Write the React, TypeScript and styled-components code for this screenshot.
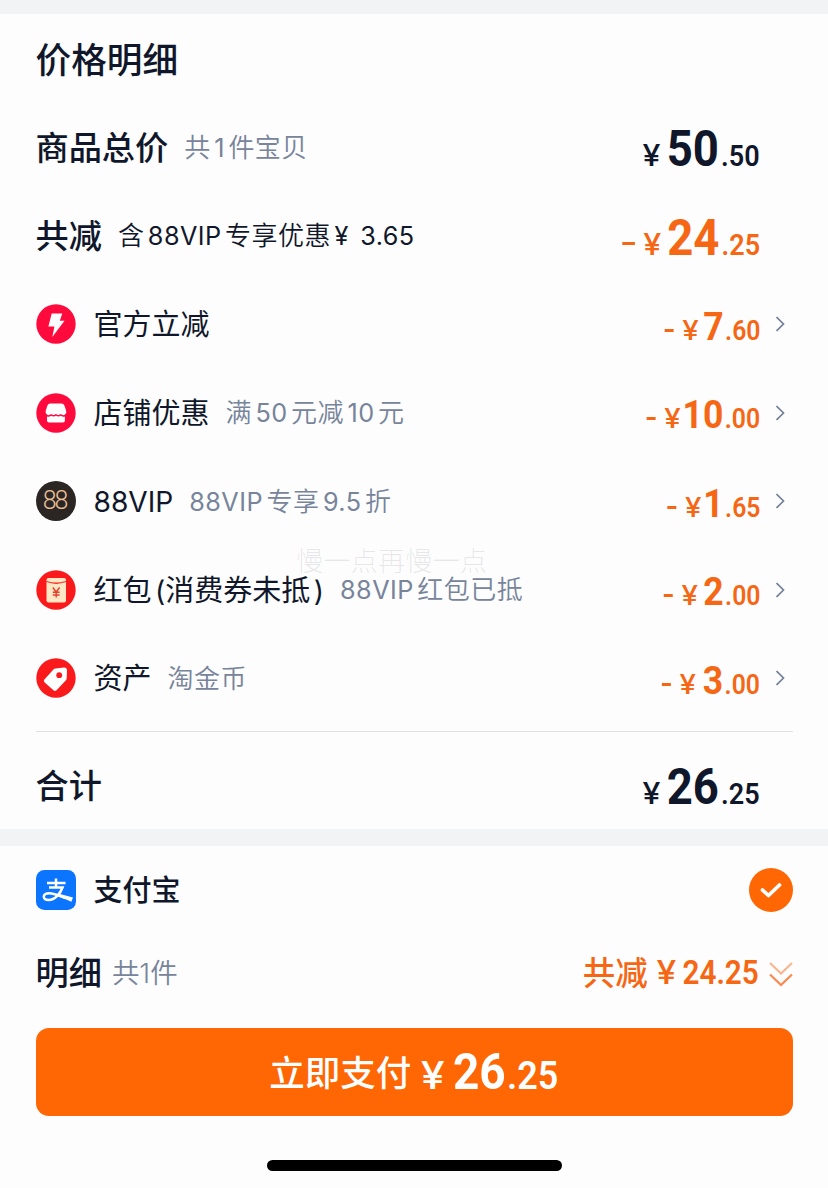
import { FC, ReactNode } from "react";
import styled, { createGlobalStyle, css } from "styled-components";

interface IAmountProps {
    int: string;
    dec: string;
    minus?: boolean;
    large?: boolean;
    gap?: number;
}

interface IDiscount {
    icon: ReactNode;
    name: string;
    note?: string;
    int: string;
    dec: string;
    gap?: number;
}

const GlobalStyle = createGlobalStyle`
  * {
    box-sizing: border-box;
  }

  body {
    margin: 0;
    background: #fdfdfe;
    color: #10172a;
    font-family: Inter, "Noto Sans CJK SC", sans-serif;
  }
`;

const Page = styled.main`
  position: relative;
  width: 828px;
  height: 1188px;
  overflow: hidden;
`;

const Strip = styled.div<{ $height: number }>`
  height: ${(p) => p.$height}px;
  background: #f2f3f5;
`;

const Section = styled.section<{ $height: number }>`
  height: ${(p) => p.$height}px;
  padding: 0 35.5px;
`;

const Row = styled.div<{ $height?: number }>`
  display: flex;
  align-items: center;
  height: ${(p) => p.$height ?? 88.5}px;
  white-space: nowrap;
`;

const Title = styled.h1`
  margin: 0;
  padding-top: 2px;
  font-size: 35.7px;
  line-height: 48px;
  font-weight: 500;
`;

const Strong = styled.span`
  padding-top: 1px;
  font-size: 33.2px;
  line-height: 44px;
  font-weight: 500;
`;

const Latin = styled.span<{ $first: boolean; $last: boolean }>`
  margin-left: ${(p) => (p.$first ? 0 : 3.5)}px;
  margin-right: ${(p) => (p.$last ? 0 : 3.5)}px;
  font-size: 0.97em;
  font-weight: 400;
  word-spacing: 4px;
`;

const Name = styled.span<{ $medium?: boolean }>`
  margin-left: 18px;
  padding-top: 2px;
  font-size: 29px;
  line-height: 40px;
  font-weight: ${(p) => (p.$medium ? 500 : 400)};

  ${Latin} {
    margin-right: 0;
  }
`;

const Note = styled.span<{ $dark?: boolean; $tight?: boolean }>`
  margin-left: ${(p) => (p.$tight ? 10 : 16)}px;
  padding-top: 1px;
  color: ${(p) => (p.$dark ? "#10172a" : "#77849a")};
  font-size: ${(p) => (p.$tight ? 27.5 : 26)}px;
  line-height: 36px;
  font-weight: 350;
  letter-spacing: ${(p) => (p.$tight ? 0 : 0.45)}px;
`;

// Roboto is squeezed a little to look like a DIN face
const AmountBox = styled.span<{ $large?: boolean; $minus?: boolean }>`
  display: flex;
  align-items: baseline;
  margin-left: auto;
  margin-right: 32.5px;
  padding-top: 9px;
  color: ${(p) => (p.$minus ? "#f56714" : "#10172a")};
  font-family: Roboto, sans-serif;
  font-weight: 600;
  line-height: 48px;
  font-size: 27.5px;
  transform: scaleX(0.9);
  transform-origin: right;

  ${(p) =>
    p.$large &&
    css`
      padding-top: 11px;
      font-size: 30px;
    `}
`;

const Minus = styled.i<{ $large?: boolean }>`
  width: ${(p) => (p.$large ? 13.5 : 10)}px;
  height: 3px;
  margin-right: 13px;
  background: currentColor;
  transform: translateY(${(p) => (p.$large ? -10 : -8)}px);
`;

const Yen = styled.span`
  font-family: Inter, sans-serif;
  font-weight: 500;
  font-size: 0.98em;
  transform: scaleX(1.22);
  transform-origin: right;
`;

const Int = styled.span<{ $large?: boolean; $gap?: number }>`
  margin-left: ${(p) => p.$gap ?? 7}px;
  margin-right: ${(p) => (p.$large ? 2.5 : 1.5)}px;
  font-size: ${(p) => (p.$large ? 50.5 : 39.5)}px;
  font-weight: 700;
`;

const Arrow = styled.svg`
  width: 10px;
  height: 16px;
  margin: 0 7px 0 -17px;
`;

const Divider = styled.hr`
  height: 1px;
  margin: 8px 0 0;
  border: 0;
  background: #dfe1e5;
`;

const Badge = styled.svg`
  width: 40px;
  height: 40px;
  flex: none;
`;

const Vip = styled.span`
  display: flex;
  align-items: center;
  justify-content: center;
  width: 40px;
  height: 40px;
  border-radius: 50%;
  background: #2b2623;
  color: #e9bf98;
  font: 300 25px/40px Roboto, sans-serif;
  letter-spacing: -2px;
  text-indent: -2px;
`;

const Check = styled.svg`
  width: 44px;
  height: 44px;
  margin-left: auto;
`;

const Saved = styled.span`
  display: flex;
  align-items: baseline;
  margin-left: auto;
  padding-top: 4px;
  color: #f56714;
  font-size: 32.5px;
  line-height: 44px;
  font-weight: 500;
`;

const SavedSum = styled.span`
  display: flex;
  gap: 7px;
  align-items: baseline;
  margin-left: 1px;
  font-family: Roboto, sans-serif;
  font-size: 33px;
  font-weight: 600;
  transform: translateY(-1px) scaleX(0.9);
  transform-origin: right;
`;

const Down = styled.svg`
  align-self: center;
  width: 24px;
  height: 28px;
  margin-left: 10px;
`;

const PayButton = styled.button`
  display: flex;
  justify-content: center;
  align-items: baseline;
  width: 100%;
  height: 88px;
  margin: 17px 0 0;
  padding: 0;
  border: 0;
  border-radius: 13px;
  background: #ff6604;
  color: #fff;
  font-family: Inter, "Noto Sans CJK SC", sans-serif;
  font-size: 35.5px;
  font-weight: 500;
  line-height: 88px;
`;

const PayLabel = styled.span`
  transform: translateY(-3px);
`;

const PaySum = styled.span`
  display: flex;
  align-items: baseline;
  margin-left: 1px;
  font-family: Roboto, sans-serif;
  font-size: 39.5px;
  font-weight: 600;
  transform: scaleX(0.91);
  transform-origin: right;
`;

const PayInt = styled.span`
  margin: 0 1.5px 0 9px;
  font-size: 50.5px;
  font-weight: 700;
`;

const HomeBar = styled.div`
  width: 295px;
  height: 11px;
  margin: 44.5px auto 0;
  border-radius: 6px;
  background: #000;
`;

// Lies over the list, between two rows
const Watermark = styled.div`
  position: absolute;
  left: 296px;
  top: 543px;
  color: rgba(20, 25, 40, 0.1);
  font-size: 27.3px;
  line-height: 38px;
  font-weight: 300;
`;

// Adds a thin gap between chinese and latin runs
const mixed = (text: string) =>
    text
        .split(/([\x21-\x7e¥]+(?: [\x21-\x7e]+)*)/)
        .filter(Boolean)
        .map((run, i, runs) =>
            /^[\x21-\x7e¥]/.test(run) ? (
                <Latin key={i} $first={i === 0} $last={i === runs.length - 1}>
                    {run}
                </Latin>
            ) : (
                run
            )
        );

const Amount: FC<IAmountProps> = ({ int, dec, minus, large, gap }) => (
    <AmountBox $large={large} $minus={minus}>
        {minus && <Minus $large={large} />}
        <Yen>¥</Yen>
        <Int $large={large} $gap={gap}>{int}</Int>
        <span>.{dec}</span>
    </AmountBox>
);

const FlashIcon = () => (
    <Badge viewBox="0 0 40 40">
        <circle cx="20" cy="20" r="19.7" fill="#ff0a3c" />
        <path d="M15.7 9.5h10.6l-2.5 7.3h4.7L16.3 33l2.1-10.5h-6z" fill="#fff" />
    </Badge>
);

const ShopIcon = () => (
    <Badge viewBox="0 0 40 40">
        <circle cx="20" cy="20" r="19.7" fill="#ff0a3c" />
        <path d="M14.5 10.5h10.8q2.4 0 3.2 2.3l1.7 5.1q.7 2.6-1.4 3.9-2.1 1-4-.8-2.4 2-4.9 0-2.4 2-4.8 0-2 1.8-4 .8-2.1-1.3-1.4-3.9l1.6-5.1q.8-2.3 3.2-2.3z" fill="#fff" />
        <path d="M11 23.5q2.2.7 4.2-.8 2.4 1.6 4.8 0 2.4 1.6 4.8 0 2 1.5 4.1.8v4q0 2-2 2H13q-2 0-2-2z" fill="#fff" />
    </Badge>
);

const PacketIcon = () => (
    <Badge viewBox="0 0 40 40">
        <circle cx="20" cy="20" r="19.7" fill="#fa1a1c" />
        <rect x="10.5" y="8" width="19.5" height="24.5" rx="2" fill="#ffe6c4" />
        <path d="M10.5 11.5q9.7 3.5 19.5 0" fill="none" stroke="#f0302a" strokeWidth="1.3" />
        <path d="M16.8 17.5l3.4 4.5 3.4-4.5M20.2 22v5.5M16.8 22.3h6.8M16.8 25h6.8" fill="none" stroke="#e2402c" strokeWidth="1.4" />
    </Badge>
);

const TagIcon = () => (
    <Badge viewBox="0 0 40 40">
        <circle cx="20" cy="20" r="19.7" fill="#fa1a1c" />
        <path d="M19.5 10.5l8.5-.9q2.8-.1 3 2.6l-.3 8q-.1 1.3-1 2.3l-9.2 9.700q-1.500 1.300-3 .1l-8.800-7.700q-1.700-1.500-.3-3.100l9-10q.9-.9 2.100-1z" fill="#fff" />
        <circle cx="23.2" cy="17.2" r="2.9" fill="#fa1a1c" />
    </Badge>
);

const AlipayIcon = () => (
    <Badge viewBox="0 0 40 40">
        <rect width="40" height="40" rx="8.5" fill="#0b75ff" />
        <path d="M11 13h18.5M20 8.500v9M13 17.500h13.500c-2 5.500-7.300 12.500-14 12.500-6.500 0-6.300-6.800.8-6.800 4.500 0 10 2.700 16 4.800" fill="none" stroke="#fff" strokeWidth="2.5" />
        <path d="M23 23.800l14 3.600-1.700 4.300-13-5.700z" fill="#fff" />
    </Badge>
);

const discounts: IDiscount[] = [
    { icon: <FlashIcon />, name: "官方立减", int: "7", dec: "60", gap: 5 },
    { icon: <ShopIcon />, name: "店铺优惠", note: "满50元减10元", int: "10", dec: "00", gap: 2 },
    { icon: <Vip>88</Vip>, name: "88VIP", note: "88VIP专享9.5折", int: "1", dec: "65", gap: 2 },
    { icon: <PacketIcon />, name: "红包(消费券未抵)", note: "88VIP红包已抵", int: "2", dec: "00", gap: 6 },
    { icon: <TagIcon />, name: "资产", note: "淘金币", int: "3", dec: "00", gap: 7.5 },
];

const App: FC = () => {
    return (
        <Page>
            <GlobalStyle />
            <Strip $height={14} />
            <Section $height={815}>
                <Row $height={89}>
                    <Title>价格明细</Title>
                </Row>
                <Row>
                    <Strong>商品总价</Strong>
                    <Note>{mixed("共1件宝贝")}</Note>
                    <Amount int="50" dec="50" large />
                </Row>
                <Row>
                    <Strong>共减</Strong>
                    <Note $dark>{mixed("含88VIP专享优惠¥ 3.65")}</Note>
                    <Amount int="24" dec="25" minus large />
                </Row>
                {discounts.map((item) => (
                    <Row key={item.name}>
                        {item.icon}
                        <Name>{mixed(item.name)}</Name>
                        {item.note && <Note>{mixed(item.note)}</Note>}
                        <Amount int={item.int} dec={item.dec} gap={item.gap} minus />
                        <Arrow viewBox="0 0 10 16">
                            <path d="M.5 1l7 7-7 7" fill="none" stroke="#718096" strokeWidth="1.7" />
                        </Arrow>
                    </Row>
                ))}
                <Divider />
                <Row $height={107}>
                    <Strong>合计</Strong>
                    <Amount int="26" dec="25" large />
                </Row>
            </Section>
            <Strip $height={17} />
            <Section $height={342}>
                <Row $height={88}>
                    <AlipayIcon />
                    <Name $medium>支付宝</Name>
                    <Check viewBox="0 0 44 44">
                        <circle cx="22" cy="22" r="22" fill="#ff6604" />
                        <path d="M13.5 22l6 5.5 11-10.5" fill="none" stroke="#fff" strokeWidth="3.7" strokeLinecap="round" strokeLinejoin="round" />
                    </Check>
                </Row>
                <Row $height={76.5}>
                    <Strong>明细</Strong>
                    <Note $tight>共1件</Note>
                    <Saved>
                        共减
                        <SavedSum>
                            <Yen>¥</Yen>
                            24.25
                        </SavedSum>
                        <Down viewBox="0 0 24 28">
                            <path d="M1 3l11 10.5L23 3" fill="none" stroke="#fbb48c" strokeWidth="2" />
                            <path d="M1 14.5L12 25l11-10.5" fill="none" stroke="#f98b50" strokeWidth="2.3" />
                        </Down>
                    </Saved>
                </Row>
                <PayButton>
                    <PayLabel>立即支付</PayLabel>
                    <PaySum>
                        <Yen>¥</Yen>
                        <PayInt>26</PayInt>
                        .25
                    </PaySum>
                </PayButton>
                <HomeBar />
            </Section>
            <Watermark>慢一点再慢一点</Watermark>
        </Page>
    );
};

export default App;
